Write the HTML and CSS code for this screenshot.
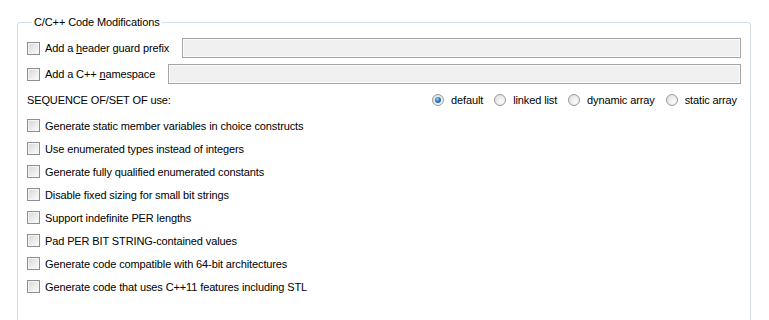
FILE: index.html
```html
<!DOCTYPE html>
<html lang="en">
<head>
    <meta charset="UTF-8">
    <title>C/C++ Code Modifications</title>
    <link rel="stylesheet" href="styles.css">
</head>
<body>
    <fieldset class="group">
        <legend>C/C++ Code Modifications</legend>
        <div class="row top">
            <label class="check"><span class="box"></span><span>Add a <u>h</u>eader guard prefix</span></label>
            <input class="field" type="text">
        </div>
        <div class="row top">
            <label class="check"><span class="box"></span><span>Add a C++ <u>n</u>amespace</span></label>
            <input class="field" type="text">
        </div>
        <div class="row top">
            <span>SEQUENCE OF/SET OF use:</span>
            <div class="radios">
                <label class="radio"><span class="dot on"></span>default</label>
                <label class="radio"><span class="dot"></span>linked list</label>
                <label class="radio"><span class="dot"></span>dynamic array</label>
                <label class="radio"><span class="dot"></span>static array</label>
            </div>
        </div>
        <div class="opts">
            <label class="check"><span class="box"></span>Generate static member variables in choice constructs</label>
            <label class="check"><span class="box"></span>Use enumerated types instead of integers</label>
            <label class="check"><span class="box"></span>Generate fully qualified enumerated constants</label>
            <label class="check"><span class="box"></span>Disable fixed sizing for small bit strings</label>
            <label class="check"><span class="box"></span>Support indefinite PER lengths</label>
            <label class="check"><span class="box"></span>Pad PER BIT STRING-contained values</label>
            <label class="check"><span class="box"></span>Generate code compatible with 64-bit architectures</label>
            <label class="check"><span class="box"></span>Generate code that uses C++11 features including STL</label>
        </div>
    </fieldset>
</body>
</html>
```

FILE: styles.css
```css
*{
    box-sizing: border-box;
}
html,body{
    height: 320px;
    overflow: hidden;
}
body{
    margin: 0;
    padding: 15px 0 0 17px;
    background: #ffffff;
    font-family: "Liberation Sans", Arial, sans-serif;
    font-size: 11px;
    letter-spacing: -0.12px;
    color: #000000;
}
.group{
    width: 734px;
    height: 305px;
    margin: 0;
    padding: 0 9px 0 9px;
    border: 1px solid #d5dfe5;
    border-bottom: none;
    border-radius: 3px 3px 0 0;
}
.group legend{
    padding: 0 2px;
    margin-left: 5px;
    line-height: 14px;
    font-size: 11px;
}
.row{
    display: flex;
    align-items: center;
}
.row.top{
    height: 26px;
}
.row.top:first-of-type{
    margin-top: 6px;
}
.check{
    display: flex;
    align-items: center;
    white-space: nowrap;
}
.box{
    width: 13px;
    height: 13px;
    margin-right: 5px;
    border: 1px solid #8f8f8f;
    background: linear-gradient(135deg, #d6d6d6 0%, #eeeeee 60%, #fbfbfb 100%);
    box-shadow: inset 0 0 0 1px #f4f4f4;
}
.field{
    flex: 1;
    height: 20px;
    margin-left: 13px;
    border: 1px solid #a5a5a5;
    background: #f0f0f0;
    box-shadow: inset 0 0 0 1px #fbfbfb;
    outline: none;
}
.radios{
    display: flex;
    margin-left: auto;
    margin-right: 4px;
}
.radio{
    display: flex;
    align-items: center;
    margin-left: 11px;
}
.dot{
    position: relative;
    width: 12px;
    height: 12px;
    margin-right: 7px;
    border: 1px solid #9a9a9a;
    border-radius: 50%;
    background: radial-gradient(circle at 65% 65%, #fbfbfb 0%, #e2e2e2 80%);
}
.dot.on::after{
    content: "";
    position: absolute;
    left: 2px;
    top: 2px;
    width: 6px;
    height: 6px;
    border-radius: 50%;
    background: radial-gradient(circle at 40% 35%, #9fd2f6 0%, #2a7bc9 45%, #103f86 100%);
}
.opts{
    display: flex;
    flex-direction: column;
    margin-top: 1px;
}
.opts .check{
    height: 23px;
}
```
